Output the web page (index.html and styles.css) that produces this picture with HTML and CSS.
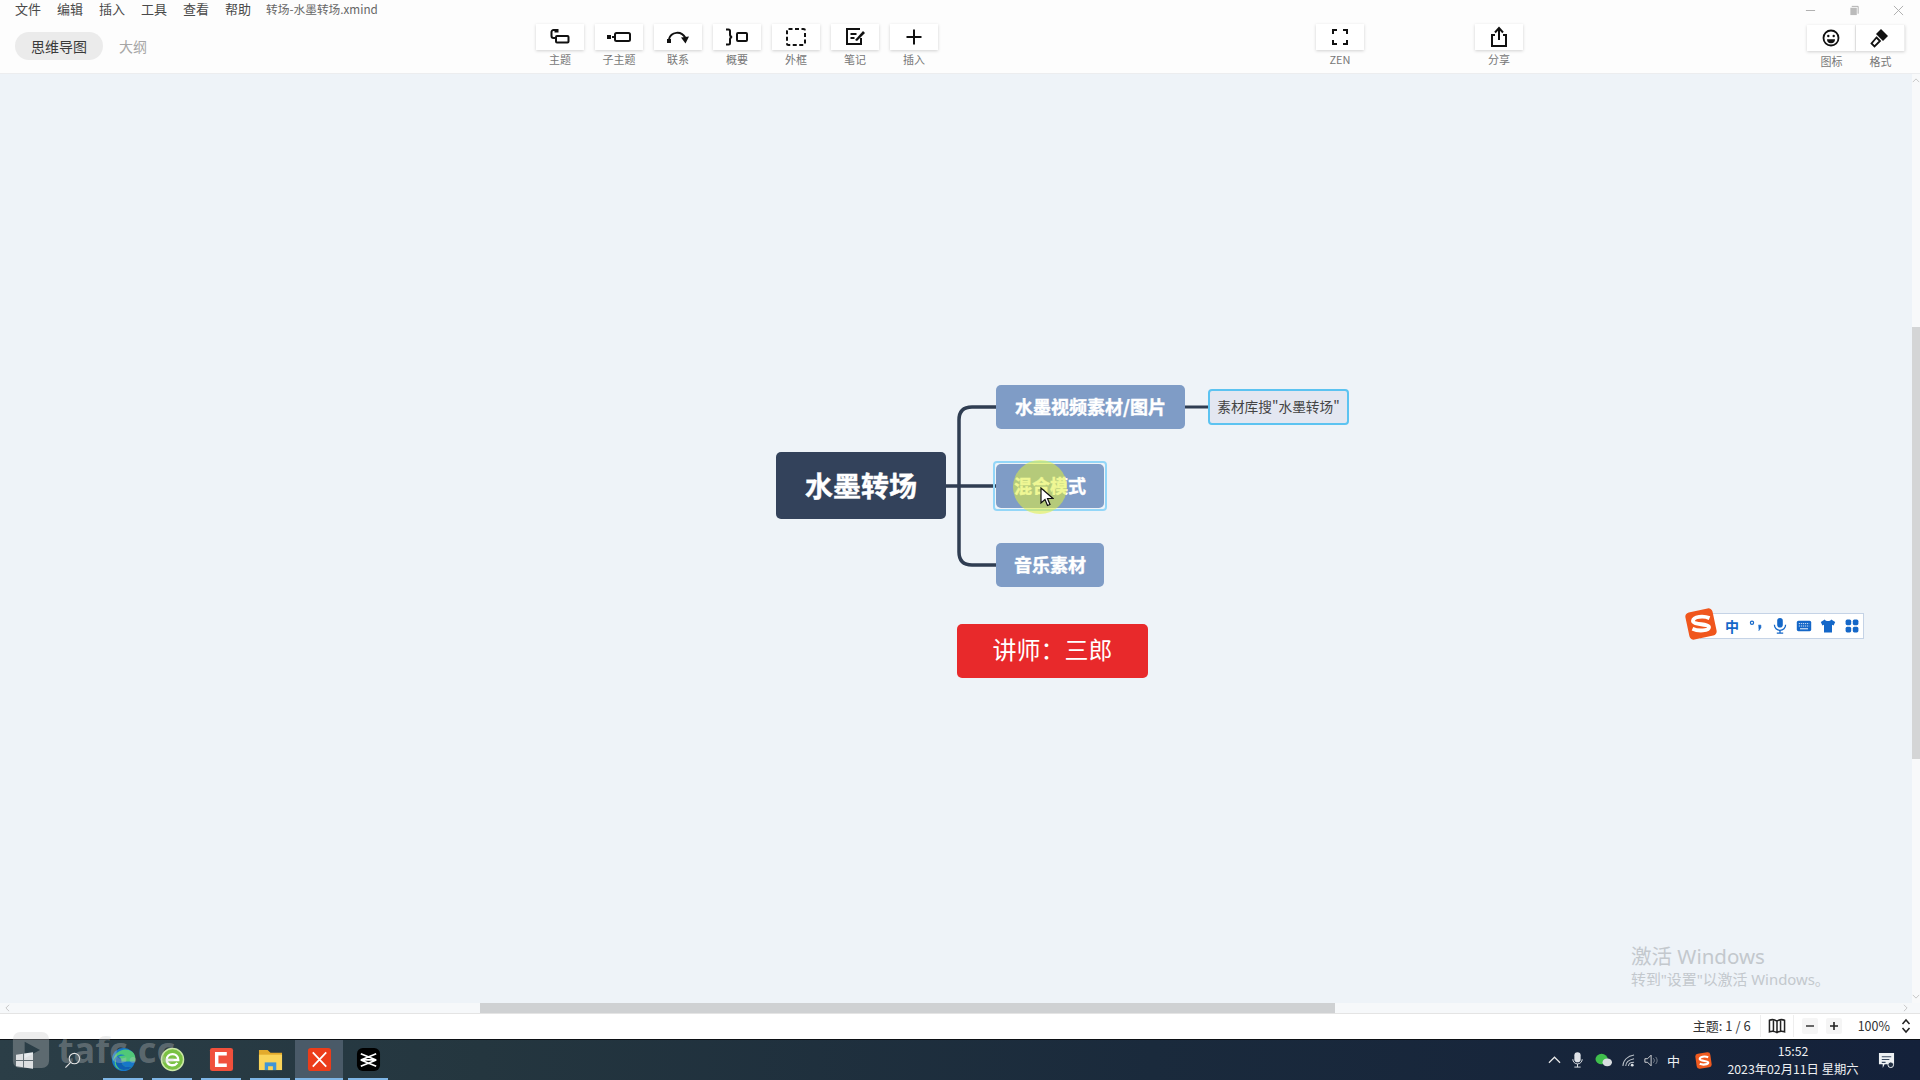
FILE: index.html
```html
<!DOCTYPE html>
<html lang="zh-CN">
<head>
<meta charset="utf-8">
<title>转场-水墨转场.xmind</title>
<link rel="stylesheet" href="styles.css">
</head>
<body>
<div class="app">
  <header class="head">
    <div class="head-left">
      <nav class="menu">
        <span>文件</span><span>编辑</span><span>插入</span><span>工具</span><span>查看</span><span>帮助</span>
        <span class="doc">转场-水墨转场.xmind</span>
      </nav>
      <div class="tabs"><span class="tab on">思维导图</span><span class="tab">大纲</span></div>
    </div>
    <div class="tools">
      <div class="tool"><div class="btn"><svg viewBox="0 0 24 20" class="ic"><path d="M8 3H5.500A2 2 0 0 0 3.500 5v4a2 2 0 0 0 2 2H8" fill="none" stroke="#111" stroke-width="2"/><rect x="6.500" y="2" width="4" height="3.500" fill="#111"/><rect x="8" y="9" width="12.500" height="6.500" rx="1" fill="none" stroke="#111" stroke-width="2"/></svg></div><span>主题</span></div>
      <div class="tool"><div class="btn"><svg viewBox="0 0 24 20" class="ic"><rect x="0" y="8" width="4" height="4" fill="#111"/><path d="M5 10h3" stroke="#111" stroke-width="2"/><rect x="8" y="6" width="15" height="8" rx="1.500" fill="none" stroke="#111" stroke-width="2"/></svg></div><span>子主题</span></div>
      <div class="tool"><div class="btn"><svg viewBox="0 0 24 20" class="ic"><rect x="1" y="12" width="4" height="4" fill="#111"/><path d="M3 12C5 5 15 3 19.500 11" fill="none" stroke="#111" stroke-width="2"/><path d="M15 10.500l8-1-3.500 7z" fill="#111"/></svg></div><span>联系</span></div>
      <div class="tool"><div class="btn"><svg viewBox="0 0 24 20" class="ic"><path d="M1 2.500h2.500a1.500 1.500 0 0 1 1.500 1.500v3.500a2.500 2.500 0 0 0 2 2.500 2.500 2.500 0 0 0-2 2.500V16a1.500 1.500 0 0 1-1.500 1.500H1" fill="none" stroke="#111" stroke-width="2"/><rect x="12" y="6" width="10" height="8" rx="1" fill="none" stroke="#111" stroke-width="2"/></svg></div><span>概要</span></div>
      <div class="tool"><div class="btn"><svg viewBox="0 0 24 20" class="ic"><rect x="3" y="2" width="18" height="16" rx="1.500" fill="none" stroke="#111" stroke-width="2" stroke-dasharray="4 2.500"/></svg></div><span>外框</span></div>
      <div class="tool"><div class="btn"><svg viewBox="0 0 24 20" class="ic"><path d="M17 2H4v15h14v-6" fill="none" stroke="#111" stroke-width="2"/><path d="M7.500 7h6M7.500 11h4" stroke="#111" stroke-width="2"/><path d="M12 13l8-9 2 2-8 8z" fill="#111"/></svg></div><span>笔记</span></div>
      <div class="tool"><div class="btn"><svg viewBox="0 0 24 20" class="ic"><path d="M12 2.500v15M4.500 10h15" stroke="#111" stroke-width="2"/></svg></div><span>插入</span></div>
    </div>
    <div class="tool zen"><div class="btn"><svg viewBox="0 0 24 20" class="ic"><path d="M9 3H5v4M15 3h4v4M9 17H5v-4M15 17h4v-4" fill="none" stroke="#111" stroke-width="2"/></svg></div><span>ZEN</span></div>
    <div class="tool share"><div class="btn"><svg viewBox="0 0 24 22" class="ic ic-tall"><path d="M8 9H5v11h14V9h-3" fill="none" stroke="#111" stroke-width="2"/><path d="M12 14V3M8 6.500L12 2l4 4.500" fill="none" stroke="#111" stroke-width="2"/></svg></div><span>分享</span></div>
    <div class="head-right">
      <div class="win">
        <svg viewBox="0 0 12 12" class="wc"><path d="M1 6h10" stroke="#aaa"/></svg>
        <svg viewBox="0 0 12 12" class="wc"><path d="M3 1.500h7v8" fill="none" stroke="#aaa"/><rect x="1.500" y="3" width="7" height="8" fill="#bbb"/></svg>
        <svg viewBox="0 0 12 12" class="wc"><path d="M1 1l10 10M11 1L1 11" stroke="#aaa"/></svg>
      </div>
      <div class="pair">
        <div class="tool"><div class="btn"><svg viewBox="0 0 20 20" class="ic"><circle cx="10" cy="10" r="7.500" fill="none" stroke="#111" stroke-width="1.800"/><circle cx="7.300" cy="8" r="1.200" fill="#111"/><circle cx="12.700" cy="8" r="1.200" fill="#111"/><path d="M6 11.200h8a4 4 0 0 1-8 0z" fill="#111"/></svg></div><span>图标</span></div>
        <div class="tool"><div class="btn"><svg viewBox="0 0 20 20" class="ic"><path d="M11 1l7 7-5 5-7-7z" fill="#111"/><path d="M6.500 9.500l3.500 3.500-5.500 5.500-3-3z" fill="none" stroke="#111" stroke-width="1.800"/></svg></div><span>格式</span></div>
      </div>
    </div>
  </header>

  <div class="work">
    <div class="work-main">
      <main class="canvas">
        <svg class="links" viewBox="0 0 1912 929">
          <path d="M946 412H996M996 333H972Q959 333 959 346V478Q959 491 972 491H996" fill="none" stroke="#2f3d52" stroke-width="3.500"/>
          <path d="M1185 333H1208" fill="none" stroke="#2f3d52" stroke-width="3"/>
        </svg>
        <div class="node root">水墨转场</div>
        <div class="node topic t1">水墨视频素材/图片</div>
        <div class="node topic t2">混合模式</div>
        <div class="node topic t3">音乐素材</div>
        <div class="node sub">素材库搜"水墨转场"</div>
        <div class="node teacher">讲师&#xFF1A;三郎</div>
        <div class="sel"></div>
        <div class="spot"></div>
        <svg class="cursor" viewBox="0 0 14 20"><path d="M1 1v15l4-3.500 2.500 6 2.500-1-2.500-6H13z" fill="#fff" stroke="#111" stroke-width="1.200"/></svg>
        <div class="ime">
          <svg viewBox="0 0 30 30" class="ime-logo"><rect x="2" y="2" width="26" height="26" rx="4" fill="#f0561d" transform="rotate(-12 15 15)"/><path d="M23 9.500C17 7 8 8 7.500 12c-.5 4 15 2.500 15 6 0 3.500-10 4-15.500 1.500" fill="none" stroke="#fff" stroke-width="3.600"/></svg>
          <span class="ime-zh">中</span>
          <svg viewBox="0 0 20 20" class="ime-ic"><circle cx="5" cy="6" r="2" fill="none" stroke="#1467c8" stroke-width="1.500"/><path d="M13 9h3v3l-2.500 4" fill="#1467c8" stroke="#1467c8"/></svg>
          <svg viewBox="0 0 20 20" class="ime-ic"><rect x="6.500" y="0" width="7" height="12" rx="3.500" fill="#1467c8"/><path d="M3 8.500a7 7 0 0 0 14 0M10 15.500V19M6 19h8" fill="none" stroke="#1467c8" stroke-width="1.600"/></svg>
          <svg viewBox="0 0 20 20" class="ime-ic"><rect x="1" y="3.500" width="18" height="13" rx="2" fill="#1467c8"/><path d="M3.500 7h13M3.500 10h13" stroke="#fff" stroke-dasharray="1.500 1"/><path d="M5 13.500h10" stroke="#fff" stroke-width="1.200"/></svg>
          <svg viewBox="0 0 20 20" class="ime-ic"><path d="M6 2L1 5l2 4.500 2-1V18h10V8.500l2 1L19 5l-5-3c-1 2.500-7 2.500-8 0z" fill="#1467c8"/></svg>
          <svg viewBox="0 0 20 20" class="ime-ic"><rect x="2" y="2" width="7" height="7" rx="2" fill="#1467c8"/><rect x="11" y="2" width="7" height="7" rx="2" fill="#1467c8"/><rect x="2" y="11" width="7" height="7" rx="2" fill="#1467c8"/><rect x="11" y="11" width="7" height="7" rx="2" fill="#1467c8"/></svg>
        </div>
        <div class="activate">
          <div class="a1">激活 Windows</div>
          <div class="a2">转到"设置"以激活 Windows。</div>
        </div>
      </main>
      <div class="vbar"><svg viewBox="0 0 10 6" class="arr"><path d="M1 5l4-4 4 4" fill="none" stroke="#bbb"/></svg><div class="vthumb"></div><svg viewBox="0 0 10 6" class="arr"><path d="M1 1l4 4 4-4" fill="none" stroke="#bbb"/></svg></div>
    </div>
    <div class="hbar">
      <svg viewBox="0 0 6 10" class="harr"><path d="M5 1L1 5l4 4" fill="none" stroke="#bbb"/></svg>
      <div class="hthumb"></div>
      <svg viewBox="0 0 6 10" class="harr end"><path d="M1 1l4 4-4 4" fill="none" stroke="#bbb"/></svg>
    </div>
  </div>

  <footer class="status">
    <span class="count">主题: 1 / 6</span>
    <span class="map"><svg viewBox="0 0 20 18" class="st-ic"><path d="M1.500 2.500C4 1.500 7 1.500 10 3.500c3-2 6-2 8.500-1v13c-2.500-1-5.500-1-8.500 1-3-2-6-2-8.500-1zM6 2v13M10 3.500v13M14 2v13" fill="none" stroke="#222" stroke-width="1.700"/></svg></span>
    <span class="zb"><svg viewBox="0 0 10 10" class="z-ic"><path d="M1 5h8" stroke="#444" stroke-width="1.600"/></svg></span>
    <span class="zb"><svg viewBox="0 0 10 10" class="z-ic"><path d="M1 5h8M5 1v8" stroke="#222" stroke-width="1.600"/></svg></span>
    <span class="pct">100%</span>
    <svg viewBox="0 0 10 16" class="updown"><path d="M1.500 6L5 2l3.500 4M1.500 10L5 14l3.500-4" fill="none" stroke="#222" stroke-width="1.500"/></svg>
  </footer>

  <div class="taskbar">
    <div class="task-slot"><svg viewBox="0 0 18 18" class="start"><path d="M0 3l7.500-1.100V8.500H0zM8.500 1.700L18 .2v8.300H8.500zM0 9.500h7.500v6.600L0 15zM8.500 9.500H18v8.300l-9.500-1.500z" fill="#e8ecef"/></svg></div>
    <div class="task-slot"><svg viewBox="0 0 18 18" class="search"><circle cx="11" cy="7" r="5.500" fill="none" stroke="#e6e6e6" stroke-width="1.200"/><path d="M7 11l-5.500 5.500" stroke="#e6e6e6" stroke-width="1.200"/></svg></div>
    <div class="apps">
      <div class="app-i"><svg viewBox="0 0 26 26" class="ai"><circle cx="13" cy="13" r="12" fill="#1777c9"/><path d="M2 15C3 5 14-1 22 5c3 2 4 6 3 10H11c0 5 6 7 11 5-5 6-17 5-18-2C3 12 9 8 15 9c-5-3-10 0-13 6z" fill="#50c878"/><path d="M11 15c0 5 6 7 11 5-3 4-9 5-13 3-4-3-5-8-3-12 2-1 5 0 5 4z" fill="#0f5fb3"/></svg></div>
      <div class="app-i"><svg viewBox="0 0 26 26" class="ai"><circle cx="13" cy="13" r="11.500" fill="#7ac143" stroke="#cde8a8" stroke-width="1.500"/><path d="M7 13.500h12c0-8-12-8-12 0 0 6 8 7 11 3" fill="none" stroke="#fff" stroke-width="2.400"/></svg></div>
      <div class="app-i"><svg viewBox="0 0 26 26" class="ai"><rect x="1" y="1" width="24" height="24" rx="2.500" fill="#f0503c"/><path d="M18.500 7H8v12h10.500" fill="none" stroke="#fff" stroke-width="3.600"/></svg></div>
      <div class="app-i"><svg viewBox="0 0 26 26" class="ai"><path d="M1 3h9l3 3h12v18H1z" fill="#e3aa2c"/><rect x="1" y="8" width="24" height="16" fill="#fad45a"/><rect x="7" y="16" width="12" height="8" fill="#3f95d6"/><rect x="10.500" y="20" width="5" height="4" fill="#fad45a"/></svg></div>
      <div class="app-i active"><svg viewBox="0 0 26 26" class="ai"><rect x="1" y="1" width="24" height="24" rx="3" fill="#ec3d1a"/><path d="M6 5.500l14 15M20 5.500l-14 15" stroke="#fff" stroke-width="1.800"/></svg></div>
      <div class="app-i"><svg viewBox="0 0 26 26" class="ai"><rect x="1" y="1" width="24" height="24" rx="6" fill="#000"/><path d="M5 7l16 6.500H5l16 6.500M21 7L5 13.500h16L5 20" fill="none" stroke="#fff" stroke-width="1.800"/></svg></div>
    </div>
    <div class="tray">
      <svg viewBox="0 0 14 8" class="t-caret"><path d="M1 7l6-6 6 6" fill="none" stroke="#e8e8e8" stroke-width="1.300"/></svg>
      <svg viewBox="0 0 14 20" class="t-mic"><rect x="3" y="0" width="8" height="13" rx="4" fill="#dfe3e8"/><path d="M1 9a6 6 0 0 0 12 0M7 15v4M3 19h8" fill="none" stroke="#dfe3e8" stroke-width="1.200"/></svg>
      <svg viewBox="0 0 18 14" class="t-we"><ellipse cx="7" cy="6" rx="6.500" ry="5.500" fill="#3fbf4c"/><ellipse cx="13" cy="9.500" rx="5" ry="4.200" fill="#d9dde0"/></svg>
      <svg viewBox="0 0 14 14" class="t-wifi"><path d="M1 13C1 7 6 2 13 1M4 13c0-4 4-7 9-8M7 13c0-2 2-4 6-4" fill="none" stroke="#b9c0c8" stroke-width="1.100"/><circle cx="11" cy="12" r="1.500" fill="#dfe3e8"/></svg>
      <svg viewBox="0 0 18 14" class="t-vol"><path d="M1 5h3l4-4v12l-4-4H1z" fill="none" stroke="#e4e4e4"/><path d="M10.500 4.500c1.500 1.500 1.500 3.500 0 5M13 3c2.300 2.300 2.300 5.700 0 8" fill="none" stroke="#8a929c"/></svg>
      <span class="t-zh">中</span>
      <svg viewBox="0 0 18 18" class="t-sg"><rect x="1" y="1" width="16" height="16" rx="3" fill="#ef5a1f" transform="rotate(-8 9 9)"/><path d="M14 5.500C10 4 5 5 5 7.500c0 2.500 9 1.500 9 3.500 0 2.500-6 2.800-9 1.500" fill="none" stroke="#fff" stroke-width="2.300"/></svg>
      <div class="clock"><span>15:52</span><span>2023年02月11日 星期六</span></div>
      <svg viewBox="0 0 18 18" class="t-note"><path d="M1 1h16v12H7l-2 4v-4H1z" fill="#eef1f4"/><path d="M4 5h10M4 8h8M4 11h4" stroke="#3a4a60" stroke-width="1.100"/><circle cx="13.500" cy="13.500" r="3" fill="#223044" stroke="#eef1f4"/></svg>
    </div>
    <div class="mark"><svg viewBox="0 0 42 42" class="mark-ic"><path fill-rule="evenodd" d="M9 1h24a8 8 0 0 1 8 8v24a8 8 0 0 1-8 8H9a8 8 0 0 1-8-8V9a8 8 0 0 1 8-8zM14 12v18l17-9z" fill="#c8c8c8"/></svg><span>tafc.cc</span></div>
  </div>
</div>
</body>
</html>
```
FILE: styles.css
```css
* { box-sizing: border-box; }
html, body { margin: 0; height: 100%; }
body { font-family: "Noto Sans CJK SC", "Noto Sans", sans-serif; overflow: hidden; background: #fff; }
.app { display: flex; flex-direction: column; width: 1920px; height: 1080px; }

.head { height: 74px; flex: none; display: flex; align-items: flex-start; background: #fdfdfd; border-bottom: 1px solid #ecedef; }
.head-left { width: 536px; flex: none; padding-left: 15px; }
.menu { display: flex; gap: 16px; font-size: 13px; line-height: 18px; color: #4a4a4a; align-items: center; }
.menu span { flex: none; }
.menu .doc { font-size: 11.700px; color: #666; margin-left: -1px; }
.tabs { display: flex; align-items: center; margin-top: 14px; gap: 16px; font-size: 14px; }
.tab { color: #a6a6a6; line-height: 28px; }
.tab.on { background: #ebebeb; color: #3a3a3a; border-radius: 14px; padding: 0 16px; }

.tools { display: flex; gap: 11px; flex: none; }
.tool { width: 48px; flex: none; display: flex; flex-direction: column; align-items: center; padding-top: 24px; font-size: 11px; line-height: 14px; color: #777; }
.tool span { margin-top: 2px; white-space: nowrap; }
.btn { width: 48px; height: 26px; background: #fff; display: flex; align-items: center; justify-content: center; box-shadow: 0 1px 3px rgba(0,0,0,.18); }
.ic { width: 24px; height: 20px; display: block; }
.ic-tall { height: 22px; }
.zen { margin-left: 378px; }
.share { margin-left: 111px; }
.head-right { margin-left: auto; width: 125px; flex: none; padding-right: 25px; }
.win { display: flex; justify-content: space-between; padding: 5px 0 0 10px; height: 25px; margin-right: -9px; }
.wc { width: 11px; height: 11px; }
.pair { display: flex; margin-left: 12px; }
.pair .tool { width: 49px; padding-top: 0; }
.pair .btn { width: 49px; height: 26px; border-right: 1px solid #eee; }
.pair .tool span { margin-top: 3px; }
.pair .ic { width: 20px; height: 20px; }

.work { flex: 1; min-height: 0; display: flex; flex-direction: column; }
.work-main { flex: 1; min-height: 0; display: flex; }
.canvas { flex: 1; position: relative; background: #eef3f8; overflow: hidden; }
.links { position: absolute; left: 0; top: 0; width: 1912px; height: 929px; }
.node { position: absolute; display: flex; align-items: center; justify-content: center; white-space: nowrap; border-radius: 5px; color: #fff; font-weight: 700; padding-bottom: 2px; }
.root { left: 776px; top: 378px; width: 170px; height: 67px; background: #33425b; font-size: 28px; -webkit-text-stroke: .4px #fff; }
.topic { background: #7f9cc6; font-size: 18px; height: 44px; -webkit-text-stroke: .4px #fff; }
.t1 { left: 996px; top: 311px; width: 189px; }
.t2 { left: 996px; top: 390px; width: 108px; }
.t3 { left: 996px; top: 469px; width: 108px; }
.sub { left: 1208px; top: 315px; width: 141px; height: 36px; background: #e3e7f1; border: 2px solid #5cc3f1; color: #444; font-size: 13.700px; font-weight: 400; border-radius: 4px; }
.teacher { left: 957px; top: 550px; width: 191px; height: 54px; background: #e8292b; font-size: 24px; font-weight: 400; padding-bottom: 5px; }
.sel { position: absolute; left: 993px; top: 387px; width: 114px; height: 50px; border: 2px solid #93d6f8; border-radius: 4px; }
.spot { position: absolute; left: 1013px; top: 386px; width: 54px; height: 54px; border-radius: 50%; background: rgba(226,240,60,.55); }
.cursor { position: absolute; left: 1040px; top: 413px; width: 14px; height: 20px; }

.ime { position: absolute; left: 1700px; top: 539px; width: 164px; height: 26px; background: #fff; border: 1px solid #c5d3e6; display: flex; align-items: center; padding-left: 23px; gap: 8px; }
.ime-logo { position: absolute; left: -16px; top: -6px; width: 32px; height: 32px; }
.ime-zh { width: 16px; font-size: 14px; font-weight: 700; line-height: 16px; color: #1467c8; text-align: center; }
.ime-ic { width: 16px; height: 16px; flex: none; }
.activate { position: absolute; left: 1631px; top: 869px; color: #c3c8cd; font-family: "Noto Sans", "Noto Sans CJK SC", sans-serif; }
.a1 { font-size: 20.500px; line-height: 26px; }
.a2 { font-size: 14.900px; line-height: 21px; }

.vbar { width: 8px; flex: none; background: #f8f9fa; display: flex; flex-direction: column; align-items: center; position: relative; }
.vthumb { position: absolute; top: 253px; left: 0; right: 0; height: 432px; background: #d4d5d6; }
.arr { width: 8px; height: 5px; margin-top: 4px; }
.arr:last-child { margin-top: auto; margin-bottom: 4px; }

.hbar { height: 11px; flex: none; background: #f6f8fa; border-bottom: 1px solid #e4e4e4; position: relative; display: flex; align-items: center; padding: 0 12px 0 5px; justify-content: space-between; }
.hthumb { position: absolute; left: 480px; top: 0; bottom: 0; width: 855px; background: #cfd1d3; }
.harr { width: 5px; height: 8px; }

.status { height: 25px; flex: none; background: #fff; display: flex; align-items: center; justify-content: flex-end; font-size: 13px; color: #333; padding: 0 9px 2px 0; }
.count { margin-right: 9px; }
.map { width: 34px; height: 22px; border-left: 1px solid #eee; border-right: 1px solid #eee; display: flex; align-items: center; justify-content: center; margin-right: 8px; }
.st-ic { width: 18px; height: 16px; }
.zb { width: 16px; height: 16px; display: flex; align-items: center; justify-content: center; margin-right: 8px; background: #f5f5f5; border-radius: 2px; }
.z-ic { width: 10px; height: 10px; }
.pct { margin: 0 11px 0 8px; font-size: 12.500px; }
.updown { width: 10px; height: 16px; }

.taskbar { height: 41px; flex: none; position: relative; display: flex; align-items: center; background: linear-gradient(90deg, #2b3e47 0%, #24363f 25%, #1a2a3c 60%, #14213a 100%); border-top: 1px solid #0c1014; color: #eef0f2; }
.mark { position: absolute; left: 12px; top: -10px; display: flex; align-items: center; gap: 8px; color: rgba(200,200,200,.32); font-size: 36px; font-weight: 700; line-height: 40px; font-family: "Noto Sans", sans-serif; }
.mark-ic { width: 38px; height: 38px; opacity: .32; }
.task-slot { width: 48px; height: 100%; flex: none; display: flex; align-items: center; justify-content: center; position: relative; }
.start { width: 17px; height: 17px; }
.search { width: 17px; height: 17px; }
.apps { display: flex; height: 100%; margin-left: 7px; gap: 9px; position: relative; }
.app-i { width: 40px; height: 100%; display: flex; align-items: center; justify-content: center; border-bottom: 2px solid #7fb6e6; padding-top: 1px; }
.app-i.active { width: 48px; margin: 0 -4px; background: #4a5a68; }
.ai { width: 25px; height: 25px; }
.tray { margin-left: auto; display: flex; align-items: center; height: 100%; position: relative; padding-right: 25px; }
.t-caret { width: 13px; height: 8px; margin-right: 11px; }
.t-mic { width: 11px; height: 16px; margin-right: 12px; }
.t-we { width: 17px; height: 14px; margin-right: 10px; }
.t-wifi { width: 13px; height: 13px; margin-right: 9px; }
.t-vol { width: 16px; height: 13px; margin-right: 7px; }
.t-zh { font-size: 13px; width: 13px; margin-right: 15px; }
.t-sg { width: 17px; height: 17px; margin-right: 14px; }
.clock { display: flex; flex-direction: column; align-items: center; font-size: 12.300px; line-height: 18px; width: 134px; margin-right: 18px; white-space: nowrap; }
.t-note { width: 17px; height: 17px; }
```
